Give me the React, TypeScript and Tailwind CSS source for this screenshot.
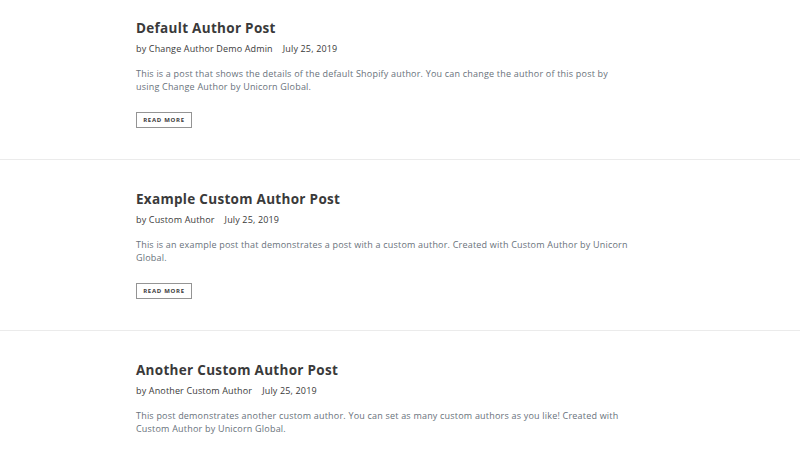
import React from "react";

const posts = [
  {
    title: "Default Author Post",
    author: "Change Author Demo Admin",
    date: "July 25, 2019",
    body: "This is a post that shows the details of the default Shopify author. You can change the author of this post by using Change Author by Unicorn Global.",
    button: true,
  },
  {
    title: "Example Custom Author Post",
    author: "Custom Author",
    date: "July 25, 2019",
    body: "This is an example post that demonstrates a post with a custom author. Created with Custom Author by Unicorn Global.",
    button: true,
  },
  {
    title: "Another Custom Author Post",
    author: "Another Custom Author",
    date: "July 25, 2019",
    body: "This post demonstrates another custom author. You can set as many custom authors as you like! Created with Custom Author by Unicorn Global.",
    button: false,
  },
];

export default function App() {
  return (
    <div
      className="w-[800px] h-[450px] overflow-hidden bg-white"
      style={{ fontFamily: '"Open Sans", "Liberation Sans", sans-serif' }}
    >
      {posts.map((p, i) => (
        <div
          key={i}
          className={`border-b border-[#ebebeb] pb-[31px] ${i === 0 ? "pt-[18px]" : "pt-[29px]"}`}
        >
          <div className="pl-[136px] w-[632px]">
            <h2 className="text-[13.5px] leading-[20px] font-bold tracking-[0.3px] text-[#3a3a3a]">{p.title}</h2>
            <div className="mt-[4px] text-[9px] leading-[14px] tracking-[0.15px] text-[#3a3a3a] flex gap-[10px]">
              <span>by {p.author}</span>
              <span>{p.date}</span>
            </div>
            <p className="mt-[11px] text-[9px] leading-[13px] tracking-[0.2px] text-[#69727b]">{p.body}</p>
            {p.button && (
              <div className="mt-[19px] flex">
                <div className="h-[16px] w-[56px] border border-[#949494] flex items-center justify-center text-[6px] font-bold tracking-[0.12em] text-[#3a3a3a]">
                  READ MORE
                </div>
              </div>
            )}
          </div>
        </div>
      ))}
    </div>
  );
}
